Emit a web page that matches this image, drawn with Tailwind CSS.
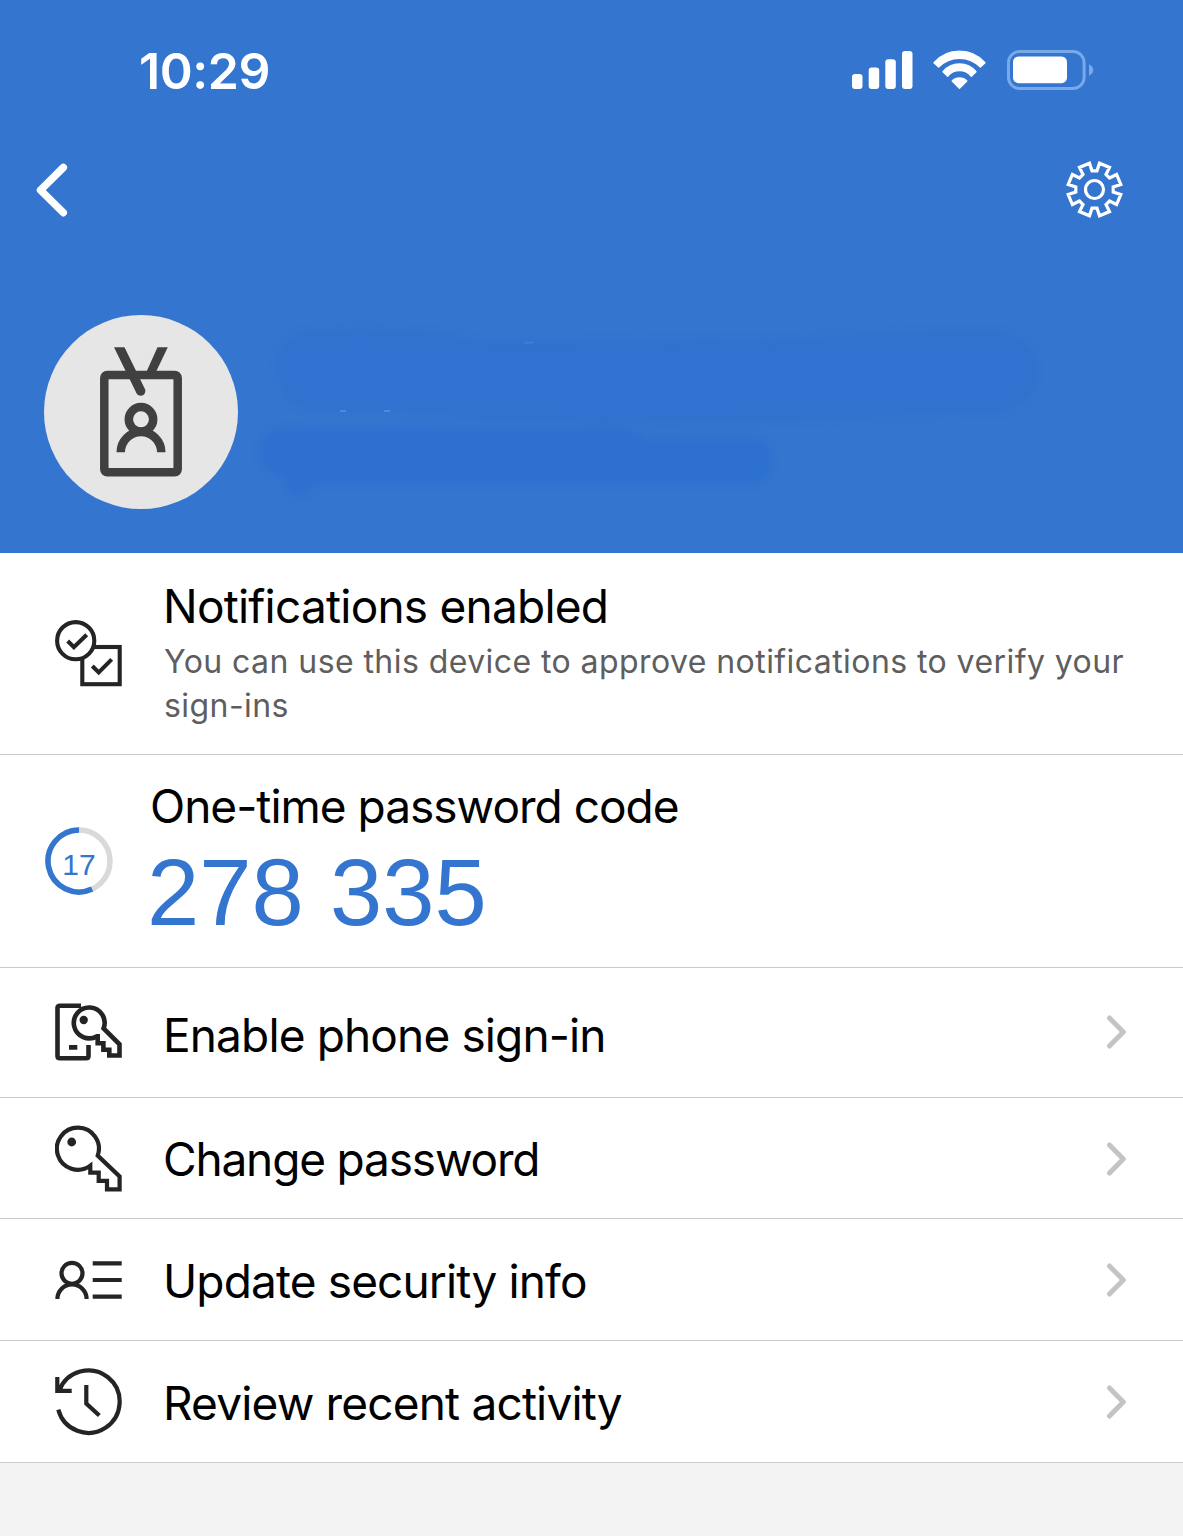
<!DOCTYPE html>
<html lang="en">
<head>
<meta charset="utf-8">
<title>Authenticator</title>
<script src="https://cdn.jsdelivr.net/npm/@tailwindcss/browser@4"></script>
</head>
<body class="bg-[#f3f3f3] font-['Inter',sans-serif] text-black w-[1183px] h-[1536px] overflow-hidden">
<header class="bg-[#3375cf] h-[553px] flex flex-col text-white">
  <div class="h-[139px] flex items-center justify-between pl-[139px] pr-[89px]">
    <div class="text-[50px] leading-[60px] font-semibold tracking-[-0.4px] mt-[2px]">10:29</div>
    <div class="flex items-center gap-[20px]">
      <svg class="w-[61px] h-[40px]" viewBox="0 0 61 40" fill="currentColor"><rect x="0" y="24" width="10.5" height="15" rx="3"/><rect x="16.7" y="17.5" width="10.5" height="21.5" rx="3"/><rect x="33.3" y="9.3" width="10.5" height="29.7" rx="3"/><rect x="50" y="1" width="10.5" height="38" rx="3"/></svg>
      <svg class="w-[54px] h-[40px]" viewBox="0 -0.5 54 40" fill="currentColor" stroke="currentColor" stroke-width="1.4" stroke-linejoin="round"><path d="M1 12.2A34 34 0 0 1 52 12.2L47.4 16.6A29 29 0 0 0 5.6 16.6Z"/><path d="M10 21.2A21.5 21.5 0 0 1 43 21.2L38.3 25.7A15.2 15.2 0 0 0 14.7 25.7Z"/><path d="M19.2 30.4A10.5 10.5 0 0 1 33.8 30.4L26.5 37.7Z"/></svg>
      <svg class="w-[87px] h-[40px]" viewBox="0 0 87 40"><rect x="1.5" y="1.5" width="75.6" height="37" rx="11" fill="none" stroke="#79a9e8" stroke-width="3"/><rect x="6" y="6.5" width="54" height="26.7" rx="5.5" fill="#fff"/><path d="M82 14.3Q86.3 16.5 86.3 20T82 25.7Z" fill="#79a9e8"/></svg>
    </div>
  </div>
  <div class="h-[101px] flex items-center justify-between pl-[35px] pr-[60px]">
    <svg class="w-[34px] h-[54px]" viewBox="0 0 34 54" fill="none" stroke="currentColor" stroke-width="7.5" stroke-linecap="round" stroke-linejoin="round"><path d="M28.3 4.5L5.5 27.2L28.3 49.7"/></svg>
    <svg class="w-[57px] h-[57px]" viewBox="-28.5 -28.5 57 57" fill="none" stroke="currentColor" stroke-width="3.2"><circle r="9"/><path d="M2.5-18.7L5-26.3L15-22.1L11.5-15L15-11.5L22.1-15L26.3-5L18.7-2.5V2.5L26.3 5L22.1 15L15 11.5L11.5 15L15 22.1L5 26.3L2.5 18.7H-2.5L-5 26.3L-15 22.1L-11.5 15L-15 11.5L-22.1 15L-26.3 5L-18.7 2.5V-2.5L-26.3-5L-22.1-15L-15-11.5L-11.5-15L-15-22.1L-5-26.3L-2.5-18.7Z"/></svg>
  </div>
  <div class="flex pl-[44px] pt-[60px]">
    <svg class="w-[194px] h-[224px] shrink-0" viewBox="0 -15 194 224"><circle cx="97" cy="97" r="97" fill="#e6e6e6"/><g fill="none" stroke="#404040" stroke-width="8.5"><rect x="60.3" y="60" width="73.4" height="97.3" rx="3"/><circle cx="97" cy="104.3" r="12.2"/><path d="M76.7 137.3A20.3 20.3 0 0 1 117.3 137.3"/></g><g fill="#404040"><path d="M70 32.3H80.5L101.4 75Q101.5 80.7 97 80.7Q93.5 80.7 92.4 78Z"/><path d="M113.5 32.3H123.8L110.5 60H101Z"/></g></svg>
    <svg class="w-[840px] h-[210px]" viewBox="0 0 840 210"><g transform="translate(2 0)"><g class="blur-[3px]" fill="#3072ce"><path d="M37 60Q42 32 75 30Q190 26 240 41Q420 41 540 40Q660 31 750 31Q795 34 798 72Q794 105 760 112Q650 116 540 121Q400 126 240 120Q160 107 75 111Q37 106 37 60Z" opacity=".8"/><path d="M20 152Q20 130 44 129L340 129Q375 118 408 138L515 138Q532 141 532 162Q530 184 512 184L76 184Q66 197 57 197Q45 193 43 178Q20 172 20 152Z" fill="#2e70cf" opacity=".9"/></g><g fill="#4b8ae0"><rect x="100" y="110" width="6" height="2"/><rect x="144" y="110" width="6" height="2"/><rect x="284" y="42" width="9" height="1.5" opacity=".6"/></g></g></svg>
  </div>
</header>
<main class="bg-white">
  <section class="h-[202px] border-b border-[#cbcbcb] flex pl-[55px] pt-[26px]">
    <svg class="w-[68px] h-[68px] mt-[41px] shrink-0" viewBox="0 0 68 68" fill="none" stroke="#242424" stroke-width="4.1"><rect x="27.3" y="27" width="37.4" height="37.2"/><circle cx="20.7" cy="20.7" r="18.6" fill="#fff"/><path d="M12.7 21L18.9 27.2L31.7 14.7M37.3 46L43.7 52.4L56.7 39.4"/></svg>
    <div class="ml-[40px]">
      <h2 class="text-[46px] leading-[54px] tracking-[-0.77px] whitespace-nowrap">Notifications enabled</h2>
      <p class="text-[32px] leading-[44px] mt-[7px] ml-[1px] text-[#5e5e5e] tracking-[0.43px] whitespace-nowrap">You can use this device to approve notifications to verify your<br>sign-ins</p>
    </div>
  </section>
  <section class="h-[213px] border-b border-[#cbcbcb] flex pl-[44px] pt-[24px]">
    <svg class="w-[70px] h-[70px] mt-[47px] shrink-0" viewBox="-35 -35 70 70"><g fill="none" stroke-width="5.5"><circle r="31" stroke="#d9d9d9"/><path d="M0-31A31 31 0 1 0 13.1 28.1" stroke="#3375cf"/></g><text y="14" text-anchor="middle" class="font-['Liberation_Sans',sans-serif] text-[30px]" fill="#3375cf">17</text></svg>
    <div class="ml-[36px]">
      <h2 class="text-[46px] leading-[54px] tracking-[-1px] whitespace-nowrap">One-time password code</h2>
      <div class="font-['Liberation_Sans',sans-serif] text-[94px] leading-[108px] mt-[6px] -ml-[3px] text-[#3375cf] whitespace-nowrap">278 335</div>
    </div>
  </section>
  <a class="h-[130px] border-b border-[#cbcbcb] flex items-center pl-[55px] pr-[55px]">
    <svg class="w-[68px] h-[58px] -mt-[2px]" viewBox="0 0 68 58" fill="none" stroke="#242424" stroke-width="4.6"><path d="M26 2.7H5Q2.5 2.7 2.5 5V53Q2.5 55.3 5 55.3H31Q33.5 55.3 33.5 53V42M14 44.4H22.3"/><path d="M42.7 33.2V40.3H48.4V46.7H54.3V52.5H64.5V41.3L48.6 25.4A15.4 15.4 0 1 0 42 33.2Z" fill="#fff"/><circle cx="28.7" cy="17" r="4.2" fill="#242424" stroke="none"/></svg>
    <span class="ml-[40px] mt-[4px] flex-1 text-[46px] leading-[54px] tracking-[-0.86px]">Enable phone sign-in</span>
    <svg class="w-[22px] h-[36px] -mt-[2px]" viewBox="0 0 22 36" fill="none" stroke="#c4c4c4" stroke-width="5" stroke-linecap="round" stroke-linejoin="round"><path d="M3.5 4L17.3 18L3.5 32"/></svg>
  </a>
  <a class="h-[121px] border-b border-[#cbcbcb] flex items-center pl-[55px] pr-[55px]">
    <svg class="w-[68px] h-[68px] mt-[2px]" viewBox="0 0 68 68" fill="none" stroke="#242424" stroke-width="4.2"><path d="M35.3 40.6V47.7H43.7V55.8H52V64.3H64.6V51.5L42.7 30.6A21 21 0 1 0 35.3 40.6Z"/><circle cx="16.7" cy="17" r="4.4" fill="#242424" stroke="none"/></svg>
    <span class="ml-[40px] mt-[2px] flex-1 text-[46px] leading-[54px] tracking-[-1.17px]">Change password</span>
    <svg class="w-[22px] h-[36px] mt-[1px]" viewBox="0 0 22 36" fill="none" stroke="#c4c4c4" stroke-width="5" stroke-linecap="round" stroke-linejoin="round"><path d="M3.5 4L17.3 18L3.5 32"/></svg>
  </a>
  <a class="h-[122px] border-b border-[#cbcbcb] flex items-center pl-[55px] pr-[55px]">
    <svg class="w-[68px] h-[40px]" viewBox="0 0 68 40" fill="none" stroke="#242424" stroke-width="4.2"><circle cx="17" cy="13.3" r="10.5"/><path d="M2.4 39A14.6 14.6 0 0 1 31.6 39M37.7 3.3H66.7M37.7 20H66.7M37.7 36.7H66.7"/></svg>
    <span class="ml-[40px] mt-[2px] flex-1 text-[46px] leading-[54px] tracking-[-0.86px]">Update security info</span>
    <svg class="w-[22px] h-[36px]" viewBox="0 0 22 36" fill="none" stroke="#c4c4c4" stroke-width="5" stroke-linecap="round" stroke-linejoin="round"><path d="M3.5 4L17.3 18L3.5 32"/></svg>
  </a>
  <a class="h-[122px] border-b border-[#cbcbcb] flex items-center pl-[55px] pr-[55px]">
    <svg class="w-[68px] h-[68px]" viewBox="0 0 68 68" fill="none" stroke="#242424" stroke-width="4.2"><path d="M2.3 9V22.8H16.7M4.2 22.8A31.2 31.2 0 1 1 3.3 41.6M31.3 17V35.5L44.3 47.5"/></svg>
    <span class="ml-[40px] mt-[2px] flex-1 text-[46px] leading-[54px] tracking-[-0.83px]">Review recent activity</span>
    <svg class="w-[22px] h-[36px]" viewBox="0 0 22 36" fill="none" stroke="#c4c4c4" stroke-width="5" stroke-linecap="round" stroke-linejoin="round"><path d="M3.5 4L17.3 18L3.5 32"/></svg>
  </a>
</main>
</body>
</html>
